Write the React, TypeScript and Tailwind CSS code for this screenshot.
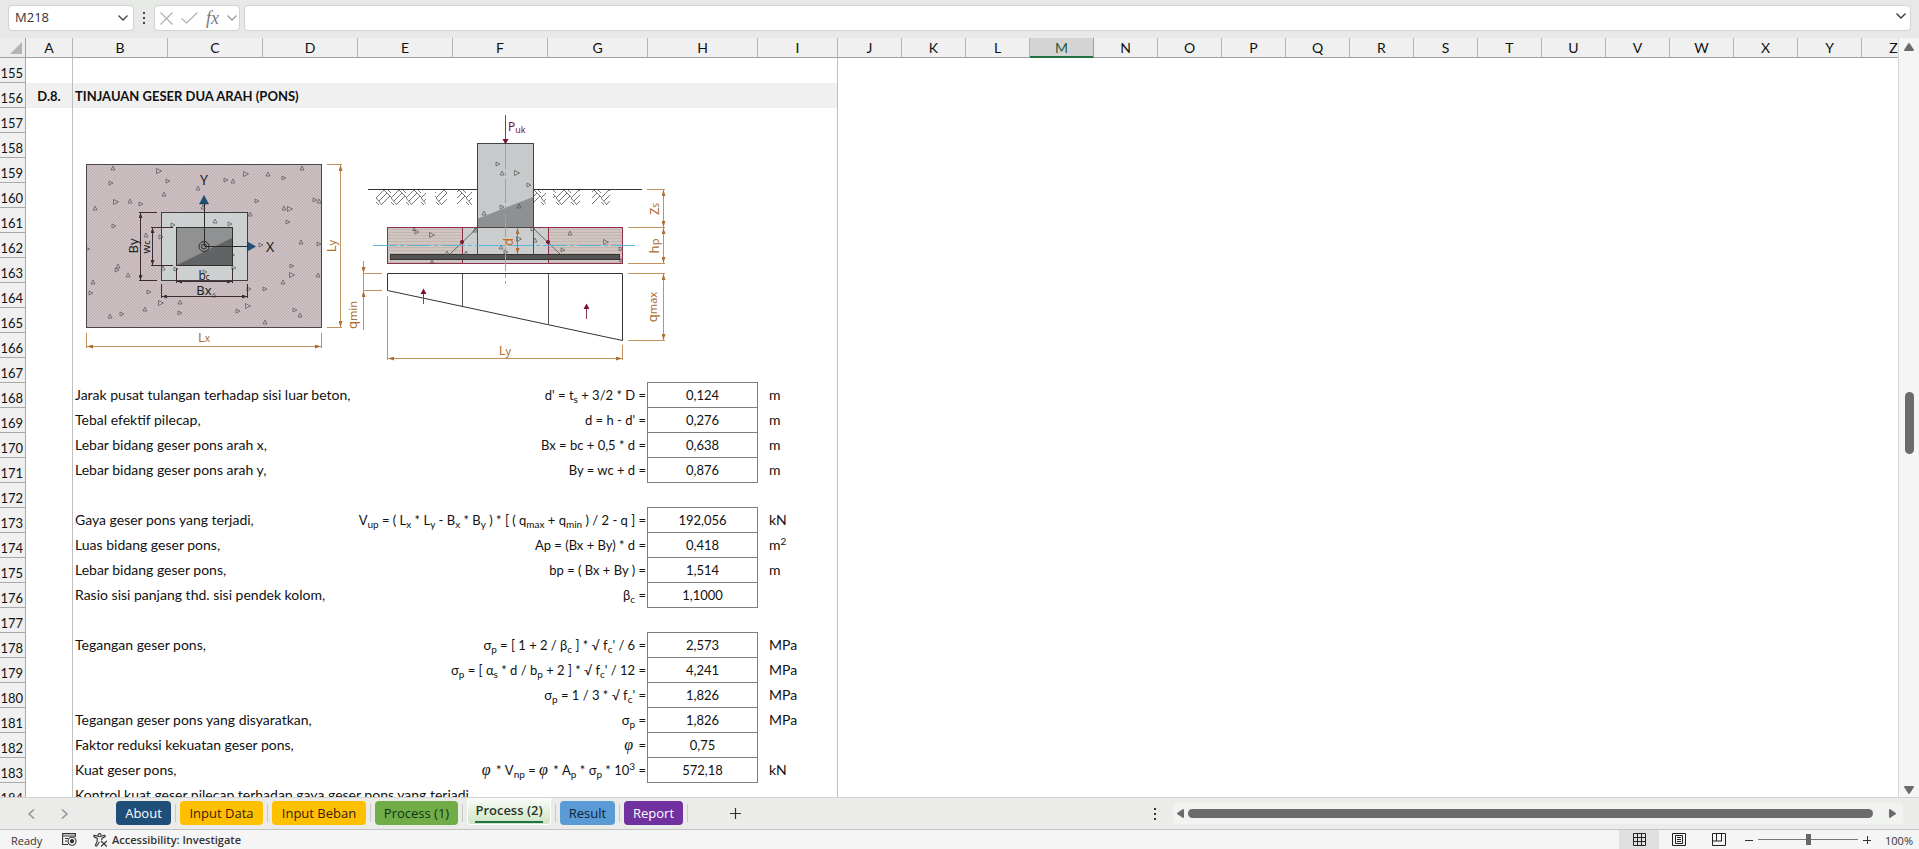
import { Fragment, type ReactElement, type ReactNode } from 'react'
import { clsx } from 'clsx'

type Row = {
  no: number
  label?: string
  formula?: ReactNode
  value?: string
  unit?: ReactNode
}

type SheetTab = {
  name: string
  className: string
  active?: boolean
}

type Mark = [x: number, y: number, size: number, dir: 'r' | 'u']

function Sub({ children }: { children: ReactNode }): ReactElement {
  return <sub className="text-[10px] leading-none">{children}</sub>
}

function Phi(): ReactElement {
  return <i className="pr-0.5 font-['Liberation_Serif',serif] text-base leading-none">φ</i>
}

const columns = [
  { name: 'A', className: 'w-[47px]' },
  { name: 'B', className: 'w-[95px]' },
  { name: 'C', className: 'w-[95px]' },
  { name: 'D', className: 'w-[95px]' },
  { name: 'E', className: 'w-[95px]' },
  { name: 'F', className: 'w-[95px]' },
  { name: 'G', className: 'w-[100px]' },
  { name: 'H', className: 'w-[110px]' },
  { name: 'I', className: 'w-[80px]' },
  ...'JKLMNOPQRSTUVWXYZ'.split('').map((name) => ({ name, className: 'w-16' })),
]

const selectedColumn = 'M'

const rows: Row[] = [
  { no: 168, label: 'Jarak pusat tulangan terhadap sisi luar beton,', formula: <>d' = t<Sub>s</Sub> + 3/2 * D =</>, value: '0,124', unit: 'm' },
  { no: 169, label: 'Tebal efektif pilecap,', formula: "d = h - d' =", value: '0,276', unit: 'm' },
  { no: 170, label: 'Lebar bidang geser pons arah x,', formula: 'Bx = bc + 0,5 * d =', value: '0,638', unit: 'm' },
  { no: 171, label: 'Lebar bidang geser pons arah y,', formula: 'By = wc + d =', value: '0,876', unit: 'm' },
  { no: 172 },
  {
    no: 173,
    label: 'Gaya geser pons yang terjadi,',
    formula: (
      <>
        V<Sub>up</Sub> = ( L<Sub>x</Sub> * L<Sub>y</Sub> - B<Sub>x</Sub> * B<Sub>y</Sub> ) * [ ( q<Sub>max</Sub> + q
        <Sub>min</Sub> ) / 2 - q ] =
      </>
    ),
    value: '192,056',
    unit: 'kN',
  },
  { no: 174, label: 'Luas bidang geser pons,', formula: 'Ap = (Bx + By) * d =', value: '0,418', unit: <>m<sup className="text-[10px] leading-none">2</sup></> },
  { no: 175, label: 'Lebar bidang geser pons,', formula: 'bp = ( Bx + By ) =', value: '1,514', unit: 'm' },
  { no: 176, label: 'Rasio sisi panjang thd. sisi pendek kolom,', formula: <>β<Sub>c</Sub> =</>, value: '1,1000' },
  { no: 177 },
  {
    no: 178,
    label: 'Tegangan geser pons,',
    formula: <>σ<Sub>p</Sub> = [ 1 + 2 / β<Sub>c</Sub> ] * √ f<Sub>c</Sub>' / 6 =</>,
    value: '2,573',
    unit: 'MPa',
  },
  {
    no: 179,
    formula: <>σ<Sub>p</Sub> = [ α<Sub>s</Sub> * d / b<Sub>p</Sub> + 2 ] * √ f<Sub>c</Sub>' / 12 =</>,
    value: '4,241',
    unit: 'MPa',
  },
  { no: 180, formula: <>σ<Sub>p</Sub> = 1 / 3 * √ f<Sub>c</Sub>' =</>, value: '1,826', unit: 'MPa' },
  { no: 181, label: 'Tegangan geser pons yang disyaratkan,', formula: <>σ<Sub>p</Sub> =</>, value: '1,826', unit: 'MPa' },
  { no: 182, label: 'Faktor reduksi kekuatan geser pons,', formula: <><Phi /> =</>, value: '0,75' },
  {
    no: 183,
    label: 'Kuat geser pons,',
    formula: (
      <>
        <Phi /> * V<Sub>np</Sub> = <Phi /> * A<Sub>p</Sub> * σ<Sub>p</Sub> * 10
        <sup className="text-[10px] leading-none">3</sup> =
      </>
    ),
    value: '572,18',
    unit: 'kN',
  },
]

const tabs: SheetTab[] = [
  { name: 'About', className: 'w-[55px] bg-[#1f4e78] text-white' },
  { name: 'Input Data', className: 'w-[83px] bg-[#ffc000] text-[#3a1a10]' },
  { name: 'Input Beban', className: 'w-[94px] bg-[#ffc000] text-[#3a1a10]' },
  { name: 'Process (1)', className: 'w-[83px] bg-[#70ad47] text-[#12301a]' },
  { name: 'Process (2)', className: 'w-[84px]', active: true },
  { name: 'Result', className: 'w-[55px] bg-[#5b9bd5] text-[#10243a]' },
  { name: 'Report', className: 'w-[59px] bg-[#7030a0] text-white' },
]

// Aggregate marks inside the concrete
const planMarks: Mark[] = [
  [113, 168, 4, 'u'], [159, 171, 5, 'r'], [111, 183, 4, 'r'], [168, 181, 4, 'r'], [198, 188, 4, 'u'],
  [226, 180, 4, 'r'], [233, 181, 4, 'u'], [246, 174, 5, 'r'], [268, 174, 4, 'u'], [284, 178, 4, 'r'],
  [302, 168, 4, 'u'], [164, 194, 4, 'u'], [95, 208, 4, 'u'], [116, 202, 5, 'r'], [130, 201, 4, 'u'],
  [141, 204, 4, 'r'], [203, 207, 4, 'u'], [257, 201, 4, 'r'], [284, 208, 4, 'u'], [290, 209, 5, 'r'],
  [315, 200, 4, 'r'], [319, 201, 4, 'u'], [250, 214, 4, 'u'], [114, 226, 4, 'r'], [146, 235, 4, 'u'],
  [288, 222, 4, 'r'], [301, 242, 4, 'u'], [319, 244, 4, 'r'], [261, 245, 4, 'r'], [88, 249, 3, 'r'],
  [118, 266, 4, 'u'], [117, 270, 4, 'r'], [128, 275, 4, 'u'], [292, 266, 4, 'r'], [292, 275, 5, 'r'],
  [283, 282, 4, 'u'], [318, 275, 4, 'u'], [93, 282, 4, 'u'], [91, 293, 4, 'r'], [149, 292, 4, 'r'],
  [265, 289, 4, 'r'], [249, 289, 4, 'r'], [214, 295, 4, 'u'], [161, 303, 5, 'r'], [180, 302, 4, 'u'],
  [180, 313, 4, 'r'], [145, 309, 4, 'u'], [238, 311, 4, 'r'], [248, 306, 5, 'r'], [295, 310, 4, 'r'],
  [300, 315, 4, 'u'], [265, 322, 4, 'u'], [110, 316, 4, 'u'], [122, 314, 4, 'r'],
]

const planInnerMarks: Mark[] = [
  [173, 225, 4, 'r'], [215, 221, 4, 'u'], [230, 224, 4, 'r'], [161, 237, 4, 'r'], [163, 268, 4, 'u'],
  [176, 269, 4, 'r'], [234, 268, 4, 'r'], [205, 272, 4, 'r'], [233, 255, 3, 'r'],
]

const sectionMarks: Mark[] = [
  [498, 164, 4, 'r'], [502, 173, 4, 'u'], [517, 173, 5, 'r'], [529, 185, 4, 'r'], [484, 213, 4, 'u'],
  [502, 207, 4, 'r'], [519, 206, 4, 'u'], [417, 232, 4, 'r'], [432, 235, 5, 'r'], [447, 253, 4, 'u'],
  [466, 253, 4, 'u'], [475, 230, 4, 'u'], [501, 247, 4, 'u'], [506, 252, 4, 'r'], [519, 239, 5, 'r'],
  [533, 229, 4, 'r'], [535, 240, 4, 'u'], [563, 250, 4, 'r'], [570, 233, 4, 'u'], [606, 242, 5, 'r'],
  [621, 249, 4, 'r'], [621, 260, 3, 'u'], [432, 261, 3, 'u'], [414, 229, 3, 'u'],
]

function Marks({ items }: { items: Mark[] }): ReactElement {
  return (
    <g fill="none" stroke="#555" strokeWidth="0.7">
      {items.map(([x, y, s, dir]) => (
        <path
          key={`${x}-${y}`}
          d={dir === 'r' ? `M${x - s / 2} ${y - s / 2}l${s} ${s / 2}l${-s} ${s / 2}z` : `M${x - s / 2} ${y + s / 2}l${s / 2} ${-s}l${s / 2} ${s}z`}
        />
      ))}
    </g>
  )
}

function FootingDrawing(): ReactElement {
  return (
    <svg
      viewBox="73 108 764 275"
      className="block h-[275px] w-[764px]"
      fontFamily="'Noto Sans', sans-serif"
      role="img"
      aria-label="Pons"
    >
      <defs>
        <pattern id="plan-hatch" width="3" height="3" patternUnits="userSpaceOnUse">
          <rect width="3" height="3" fill="#cec1c4" />
          <path d="M0 3L3 0" stroke="#b3a3a8" strokeWidth="0.6" />
        </pattern>
        <pattern id="section-hatch" width="3" height="3" patternUnits="userSpaceOnUse">
          <rect width="3" height="3" fill="#d0c5c0" />
          <path d="M0 1.5H3" stroke="#c3b7b1" strokeWidth="1" />
        </pattern>
        <pattern id="soil" x="376" y="190" width="15" height="15" patternUnits="userSpaceOnUse">
          <path d="M0 8L8 0M3 11L11 3M6 14L14 6M8 0L15 7M11 -1L15 3M0 8L6 15M0 12L3 15" stroke="#555" strokeWidth="0.8" fill="none" />
        </pattern>
        <marker id="dim-orange" markerWidth="6" markerHeight="4" refX="6" refY="2" orient="auto-start-reverse" markerUnits="userSpaceOnUse">
          <path d="M0 0L6 2L0 4z" fill="#ad6f30" />
        </marker>
        <marker id="dim-dark" markerWidth="5" markerHeight="4" refX="5" refY="2" orient="auto-start-reverse" markerUnits="userSpaceOnUse">
          <path d="M0 0L5 2L0 4z" fill="#3d2b30" />
        </marker>
      </defs>

      {/* plan */}
      <rect x="86.5" y="164.5" width="235" height="163" fill="url(#plan-hatch)" stroke="#4a4548" />
      <Marks items={planMarks} />
      <rect x="161.5" y="212.5" width="86" height="68" fill="#cdd0d1" stroke="#3f3f3f" />
      <Marks items={planInnerMarks} />
      <rect x="176.5" y="227.5" width="56" height="38" fill="#909193" stroke="#2f2f2f" />
      <path d="M177 265L232 238V265z" fill="#626365" />
      <g stroke="#2b2b2b" fill="none">
        <path d="M204.5 246V204M204.5 246.5H247" />
        <circle cx="204" cy="246.5" r="5" />
        <circle cx="204" cy="246.5" r="2.5" />
      </g>
      <path d="M204 195.5L208.5 204H199.5zM255.5 246.5L247.5 242V251z" fill="#1d5179" stroke="#123349" strokeWidth="0.5" />
      <g stroke="#3d2b30" fill="none">
        <path d="M139 212.5H157M139 280.5H157M151 227.5H173M151 265.5H173" />
        <path d="M176.5 268V283M232.5 268V283M161.5 284V298M247.5 284V298" />
        <path d="M140.5 213V280" markerStart="url(#dim-dark)" markerEnd="url(#dim-dark)" />
        <path d="M152.5 228V265" markerStart="url(#dim-dark)" markerEnd="url(#dim-dark)" />
        <path d="M177 281.5H232" markerStart="url(#dim-dark)" markerEnd="url(#dim-dark)" />
        <path d="M162 296.5H247" markerStart="url(#dim-dark)" markerEnd="url(#dim-dark)" />
      </g>
      <g fill="#222" textAnchor="middle">
        <text x="204" y="185" fontSize="14">Y</text>
        <text x="270" y="252" fontSize="14">X</text>
        <text x="204" y="280" fontSize="12">b<tspan fontSize="8">c</tspan></text>
        <text x="204" y="295" fontSize="13">Bx</text>
        <text transform="translate(138 246) rotate(-90)" fontSize="13">By</text>
        <text transform="translate(150 247) rotate(-90)" fontSize="11">w<tspan fontSize="9">c</tspan></text>
      </g>

      {/* section */}
      <rect x="376" y="190" width="50" height="15" fill="url(#soil)" />
      <rect x="435" y="190" width="12" height="15" fill="url(#soil)" />
      <rect x="457" y="190" width="15" height="15" fill="url(#soil)" />
      <rect x="534" y="190" width="12" height="15" fill="url(#soil)" />
      <rect x="553" y="190" width="27" height="15" fill="url(#soil)" />
      <rect x="592" y="190" width="18" height="15" fill="url(#soil)" />
      <path d="M368 189.5H642" stroke="#333" />
      <rect x="387.5" y="227.5" width="235" height="36" fill="url(#section-hatch)" stroke="#8e3049" />
      <rect x="462" y="228" width="86" height="35" fill="#cbcdce" />
      <path d="M462.5 228V263M548.5 228V263M477.5 228V254M533.5 228V254" stroke="#8e3049" />
      <path d="M477 228L450 254M533 228L560 254" stroke="#666" />
      <circle cx="462" cy="242" r="2" fill="#7b1232" />
      <circle cx="548" cy="242" r="2" fill="#7b1232" />
      <rect x="477.5" y="143.5" width="56" height="84" fill="#c8c9cb" stroke="#444" />
      <path d="M478 218.5L533 197V227H478z" fill="#8f9092" />
      <rect x="390.5" y="254.5" width="229" height="5" fill="#565353" stroke="#353233" />
      <Marks items={sectionMarks} />
      <path d="M505.5 115V140" stroke="#8a3a4c" />
      <path d="M502.5 139H508.5L505.5 144.5z" fill="#7b1232" />
      <text x="508" y="131" fontSize="12" fill="#7b1232">P<tspan fontSize="9" dy="2">uk</tspan></text>
      <path d="M387.5 273.5H622.5V340.5L387.5 290.5z" fill="none" stroke="#333" />
      <path d="M462.5 274V306M548.5 274V324" stroke="#555" />
      <path d="M373 245.5H638M505.5 145V284" stroke="#5bb8d8" strokeDasharray="24 3 4 3" fill="none" />
      <path d="M423.5 293V304M586.5 308V319" stroke="#8a3a4c" />
      <path d="M420.5 294H426.5L423.5 288.5zM583.5 309H589.5L586.5 303.5z" fill="#7b1232" />

      {/* dimensions */}
      <g stroke="#c2935f" fill="none">
        <path d="M86.5 333V348M321.5 333V348M327 164.5H342M327 327.5H342M387.5 296V360M622.5 345V360" />
        <path d="M363 273.5H382M363 290.5H382M647 189.5H665M628 227.5H665M628 263.5H665M628 273.5H665M628 340.5H665" />
        <path d="M87 346.5H321" markerStart="url(#dim-orange)" markerEnd="url(#dim-orange)" />
        <path d="M340.5 165V327" markerStart="url(#dim-orange)" markerEnd="url(#dim-orange)" />
        <path d="M388 358.5H622" markerStart="url(#dim-orange)" markerEnd="url(#dim-orange)" />
        <path d="M663.5 190V227" markerStart="url(#dim-orange)" markerEnd="url(#dim-orange)" />
        <path d="M663.5 228V263" markerStart="url(#dim-orange)" markerEnd="url(#dim-orange)" />
        <path d="M663.5 274V340" markerStart="url(#dim-orange)" markerEnd="url(#dim-orange)" />
        <path d="M363.5 261V273" markerEnd="url(#dim-orange)" />
        <path d="M363.5 330V291" markerEnd="url(#dim-orange)" />
        <path d="M363.5 273V291" />
        <path d="M517.5 228V254" stroke="#c96a1e" markerStart="url(#dim-orange)" markerEnd="url(#dim-orange)" />
      </g>
      <g fill="#ad6f30" textAnchor="middle">
        <text x="204" y="342" fontSize="13">L<tspan fontSize="10">x</tspan></text>
        <text x="505" y="355" fontSize="13">L<tspan fontSize="11">y</tspan></text>
        <text transform="translate(336 246) rotate(-90)" fontSize="13">L<tspan fontSize="11">y</tspan></text>
        <text transform="translate(357 315) rotate(-90)" fontSize="13">q<tspan fontSize="11">min</tspan></text>
        <text transform="translate(659 209) rotate(-90)" fontSize="13">Z<tspan fontSize="10">s</tspan></text>
        <text transform="translate(659 246) rotate(-90)" fontSize="13">h<tspan fontSize="11">p</tspan></text>
        <text transform="translate(657 307) rotate(-90)" fontSize="13">q<tspan fontSize="11">max</tspan></text>
        <text transform="translate(513 242) rotate(-90)" fontSize="13" fill="#c96a1e">d</text>
      </g>
    </svg>
  )
}

function Chevron({ className }: { className?: string }): ReactElement {
  return (
    <svg viewBox="0 0 10 6" className={clsx('h-[6px] w-[10px]', className)} fill="none" stroke="currentColor" strokeWidth="1.3">
      <path d="M0.5 0.5L5 5L9.5 0.5" />
    </svg>
  )
}

function FormulaBar(): ReactElement {
  return (
    <div className="flex h-[38px] shrink-0 items-start bg-[#e6e9e6] px-2 pt-[5px]">
      <div className="flex h-[26px] w-[126px] items-center rounded border border-[#d0d3d0] bg-white pr-[5px] pl-1.5">
        <input
          aria-label="Name box"
          defaultValue="M218"
          className="w-full min-w-0 bg-transparent font-['Open_Sans',sans-serif] text-[13px] text-[#333] outline-none"
        />
        <button type="button" aria-label="Name list" className="text-[#444]">
          <Chevron />
        </button>
      </div>
      <svg viewBox="0 0 20 26" className="h-[26px] w-5 shrink-0" fill="#444">
        <rect x="9" y="7" width="2" height="2" />
        <rect x="9" y="12" width="2" height="2" />
        <rect x="9" y="17" width="2" height="2" />
      </svg>
      <div className="flex h-[26px] w-[86px] items-center justify-between rounded border border-[#d0d3d0] bg-white pr-0.5 pl-[5px] text-[#b0b0b0]">
        <button type="button" aria-label="Cancel">
          <svg viewBox="0 0 13 13" className="size-[13px]" fill="none" stroke="currentColor" strokeWidth="1.2">
            <path d="M0.5 0.5L12.5 12.5M12.5 0.5L0.5 12.5" />
          </svg>
        </button>
        <button type="button" aria-label="Enter">
          <svg viewBox="0 0 17 12" className="h-3 w-[17px]" fill="none" stroke="currentColor" strokeWidth="1.2">
            <path d="M0.5 6.5L5.5 11L16.5 0.5" />
          </svg>
        </button>
        <button
          type="button"
          className="font-['Liberation_Serif',serif] text-lg leading-none text-[#7a7a7a] italic"
        >
          fx
        </button>
        <Chevron className="text-[#999]" />
      </div>
      <div className="ml-1 flex h-[26px] flex-1 items-center rounded border border-[#d0d3d0] bg-white pr-1">
        <input aria-label="Formula bar" className="min-w-0 flex-1 bg-transparent px-2 text-sm outline-none" />
        <button type="button" aria-label="Expand formula bar" className="pb-1 text-[#333]">
          <Chevron />
        </button>
      </div>
    </div>
  )
}

function RowHeader({ no }: { no: number }): ReactElement {
  return (
    <th
      scope="row"
      className="h-[25px] border-r border-b border-[#a9a9a9] bg-[#f0f0f0] p-0 pr-0.5 text-right align-bottom text-[13px] leading-[18px] font-normal"
    >
      {no}
    </th>
  )
}

function Sheet(): ReactElement {
  return (
    <div className="min-w-0 flex-1 overflow-hidden border-r border-[#d4d8d4] bg-white">
      <table className="w-[1926px] table-fixed border-separate border-spacing-0 font-[Lato,'Open_Sans',sans-serif] text-sm text-[#111]">
        <colgroup>
          <col className="w-[26px]" />
          {columns.map((col) => (
            <col key={col.name} className={col.className} />
          ))}
        </colgroup>
        <thead>
          <tr>
            <th className="h-5 border-r border-b border-[#a0a0a0] bg-[#ececec] p-0">
              <svg viewBox="0 0 25 19" className="block h-[19px] w-[25px]">
                <path d="M22 4V16H10z" fill="#b4b4b4" />
              </svg>
            </th>
            {columns.map((col) => (
              <th
                key={col.name}
                scope="col"
                className={clsx(
                  'h-5 border-r border-b p-0 text-center align-bottom text-sm leading-[18px] font-normal',
                  col.name === selectedColumn
                    ? 'border-r-[#a0a0a0] border-b-[#217346] bg-[#d4d4d4] text-[#1f5c3c] shadow-[inset_0_-1px_0_#217346]'
                    : 'border-[#a0a0a0] border-r-[#b4b4b4] bg-[#eff0ef]',
                )}
              >
                {col.name}
              </th>
            ))}
          </tr>
        </thead>
        <tbody>
          <tr>
            <RowHeader no={155} />
            <td className="border-r border-[#c0c0c0] p-0" />
            <td colSpan={8} className="border-r border-[#c0c0c0] p-0" />
            <td colSpan={17} className="p-0" />
          </tr>
          <tr>
            <RowHeader no={156} />
            <td className="border-r border-[#c0c0c0] bg-[#f0f0f0] p-0 text-center text-[13px] leading-6 font-bold">D.8.</td>
            <td colSpan={8} className="border-r border-[#c0c0c0] bg-[#f0f0f0] p-0 pl-0.5 text-[13px] leading-6 font-bold">
              TINJAUAN GESER DUA ARAH (PONS)
            </td>
            <td colSpan={17} className="p-0" />
          </tr>
          {Array.from({ length: 11 }, (_, i) => (
            <tr key={i}>
              <RowHeader no={157 + i} />
              <td className="border-r border-[#c0c0c0] p-0" />
              {i === 0 && (
                <td colSpan={8} rowSpan={11} className="border-r border-[#c0c0c0] p-0 align-top">
                  <FootingDrawing />
                </td>
              )}
              <td colSpan={17} className="p-0" />
            </tr>
          ))}
          {rows.map((row, i) => (
            <tr key={row.no} className="leading-6">
              <RowHeader no={row.no} />
              <td className="border-r border-[#c0c0c0] p-0" />
              <td colSpan={3} className="p-0 pl-0.5 align-top whitespace-nowrap">
                {row.label}
              </td>
              <td colSpan={3} className="p-0 pr-0.5 text-right align-top text-[13px] whitespace-nowrap">
                <div className="h-6">{row.formula}</div>
              </td>
              {row.value ? (
                <td
                  className={clsx(
                    'border-r border-b border-[#7f7f7f] p-0 text-center text-[13px]',
                    rows[i - 1]?.value
                      ? 'shadow-[-1px_0_0_#7f7f7f]'
                      : 'shadow-[-1px_0_0_#7f7f7f,0_-1px_0_#7f7f7f,-1px_-1px_0_#7f7f7f]',
                  )}
                >
                  {row.value}
                </td>
              ) : (
                <td className="p-0" />
              )}
              <td className="border-r border-[#c0c0c0] p-0 pl-[11px] align-top">{row.unit}</td>
              <td colSpan={17} className="p-0" />
            </tr>
          ))}
          <tr>
            <RowHeader no={184} />
            <td className="border-r border-[#c0c0c0] p-0" />
            <td colSpan={8} className="border-r border-[#c0c0c0] p-0 pl-0.5 align-top leading-6">
              Kontrol kuat geser pilecap terhadap gaya geser pons yang terjadi
            </td>
            <td colSpan={17} className="p-0" />
          </tr>
        </tbody>
      </table>
    </div>
  )
}

function VerticalScroll(): ReactElement {
  return (
    <div className="flex w-5 shrink-0 flex-col items-center bg-[#f4f5f4] py-0.5 text-[#6b6b6b]">
      <button type="button" aria-label="Scroll up" className="py-[3px]">
        <svg viewBox="0 0 10 8" className="h-2 w-[10px]" fill="currentColor">
          <path d="M4.2 0.5Q5 -0.3 5.8 0.5L10 7Q10 8 9 8H1Q0 8 0 7z" />
        </svg>
      </button>
      <div className="flex min-h-0 w-full flex-1 flex-col items-center">
        <div className="grow-[341]" />
        <div className="h-[62px] w-[9px] rounded-full bg-[#6b6b6b]" />
        <div className="grow-[333]" />
      </div>
      <button type="button" aria-label="Scroll down" className="py-px">
        <svg viewBox="0 0 10 8" className="h-2 w-[10px]" fill="currentColor">
          <path d="M4.2 7.5Q5 8.3 5.8 7.5L10 1Q10 0 9 0H1Q0 0 0 1z" />
        </svg>
      </button>
    </div>
  )
}

function TabBar(): ReactElement {
  return (
    <div className="flex h-[33px] shrink-0 items-start border-t border-b border-t-[#d0d3d0] border-b-[#c2c4c2] bg-[#ebebea] font-['Open_Sans',sans-serif] text-[13px]">
      <div className="flex h-[31px] w-[112px] shrink-0 items-center gap-[26px] pl-7 text-[#8f8f8f]">
        <button type="button" aria-label="Previous sheet">
          <svg viewBox="0 0 7 10" className="h-[10px] w-[7px]" fill="none" stroke="currentColor" strokeWidth="1.4">
            <path d="M6 0.5L1 5L6 9.5" />
          </svg>
        </button>
        <button type="button" aria-label="Next sheet">
          <svg viewBox="0 0 7 10" className="h-[10px] w-[7px]" fill="none" stroke="currentColor" strokeWidth="1.4">
            <path d="M1 0.5L6 5L1 9.5" />
          </svg>
        </button>
      </div>
      {tabs.map((tab) => (
        <Fragment key={tab.name}>
          {tab.active ? (
            <button
              type="button"
              className={clsx(
                'mx-1 flex h-[27px] shrink-0 justify-center rounded-b border border-t-0 border-white bg-linear-to-b from-[#fafcf9] to-[#cfe4c2] font-semibold text-[#26352a]',
                tab.className,
              )}
            >
              <span className="h-[25px] border-b-2 border-[#217346] leading-6 whitespace-nowrap">{tab.name}</span>
            </button>
          ) : (
            <button
              type="button"
              className={clsx('mx-1 mt-[3px] h-6 shrink-0 rounded leading-6 whitespace-nowrap', tab.className)}
            >
              {tab.name}
            </button>
          )}
          <span className="mt-1.5 h-[18px] w-px shrink-0 bg-[#c9cbc9]" />
        </Fragment>
      ))}
      <button type="button" aria-label="New sheet" className="mt-2.5 ml-[42px] shrink-0 text-[#333]">
        <svg viewBox="0 0 11 11" className="size-[11px]" stroke="currentColor" strokeWidth="1.2">
          <path d="M5.5 0V11M0 5.5H11" />
        </svg>
      </button>
      <div className="min-w-0 flex-1" />
      <svg viewBox="0 0 4 12" className="mt-2.5 h-3 w-1 shrink-0" fill="#333">
        <rect x="1" y="0" width="2" height="2" />
        <rect x="1" y="5" width="2" height="2" />
        <rect x="1" y="10" width="2" height="2" />
      </svg>
      <div className="mr-4 ml-4 flex h-[21px] w-[730px] shrink-0 items-center gap-1 self-center rounded bg-[#f1f3f1] px-1 text-[#6b6b6b]">
        <button type="button" aria-label="Scroll left">
          <svg viewBox="0 0 7 9" className="h-[9px] w-[7px]" fill="currentColor">
            <path d="M0.5 3.8Q-0.3 4.5 0.5 5.2L6 9Q7 9 7 8V1Q7 0 6 0z" />
          </svg>
        </button>
        <div className="h-[9px] flex-1 rounded-full bg-[#6b6b6b]" />
        <button type="button" aria-label="Scroll right" className="pr-[3px] pl-3">
          <svg viewBox="0 0 7 9" className="h-[9px] w-[7px]" fill="currentColor">
            <path d="M6.5 3.8Q7.3 4.5 6.5 5.2L1 9Q0 9 0 8V1Q0 0 1 0z" />
          </svg>
        </button>
      </div>
    </div>
  )
}

function StatusBar(): ReactElement {
  return (
    <div className="flex h-[19px] shrink-0 items-center bg-[#f5f5f5] font-['Open_Sans',sans-serif] text-[11px] leading-[17px] text-[#333]">
      <span className="w-[62px] pt-0.5 pl-[11px]">Ready</span>
      <button type="button" aria-label="Record macro">
        <svg viewBox="0 0 15 13" className="h-[13px] w-[15px]" fill="none" stroke="#333" strokeWidth="1.1">
          <path d="M6 11.5H0.6V0.6H13.4V4M0.6 3H13.4M3 5.5H6M3 8H5" />
          <circle cx="10" cy="8.2" r="4" />
          <circle cx="10" cy="8.2" r="1.6" fill="#333" />
        </svg>
      </button>
      <button type="button" className="ml-4 flex items-center gap-1 font-semibold">
        <svg viewBox="0 0 15 14" className="h-[14px] w-[15px]" fill="none" stroke="#333" strokeWidth="1.1">
          <circle cx="6.5" cy="2.2" r="1.6" />
          <path d="M4.8 3.2L1.6 2.4Q0.3 2.6 1 3.8L4.2 5.4V8L2.4 12.2Q2.6 13.6 3.8 12.8L6.4 8.8M8.2 3.2L11.4 2.4Q12.8 2.6 12 3.8L8.8 5.4V7.2" />
          <path d="M8 8L13.8 13.5M13.8 8L8 13.5" />
        </svg>
        Accessibility: Investigate
      </button>
      <div className="flex-1" />
      <button type="button" aria-label="Normal" className="flex h-full w-10 items-center justify-center bg-[#e0e0e0]">
        <svg viewBox="0 0 13 13" className="size-[13px]" fill="none" stroke="#222">
          <path d="M0.5 0.5H12.5V12.5H0.5zM4.5 0V13M8.5 0V13M0 4.5H13M0 8.5H13" />
        </svg>
      </button>
      <button type="button" aria-label="Page layout" className="flex w-10 justify-center">
        <svg viewBox="0 0 14 13" className="h-[13px] w-[14px]" fill="none" stroke="#222">
          <path d="M0.5 0.5H13.5V12.5H0.5zM3.5 2.5H10.5V10.5H3.5zM5 4.5H9M5 6.5H9M5 8.5H9" />
        </svg>
      </button>
      <button type="button" aria-label="Page break preview" className="flex w-10 justify-center">
        <svg viewBox="0 0 14 13" className="h-[13px] w-[14px]" fill="none" stroke="#222">
          <path d="M0.5 0.5H13.5V12.5H0.5zM4.5 0V8M9.5 0V8M0 8H10" />
        </svg>
      </button>
      <button type="button" aria-label="Zoom out" className="ml-[6px]">
        <svg viewBox="0 0 8 8" className="size-2" stroke="#333">
          <path d="M0 4.5H8" />
        </svg>
      </button>
      <input
        type="range"
        min={0}
        max={100}
        defaultValue={50}
        aria-label="Zoom"
        className="mx-[5px] h-3 w-[100px] appearance-none bg-[linear-gradient(#777,#777)] bg-[length:100%_1px] bg-center bg-no-repeat [&::-webkit-slider-thumb]:h-[11px] [&::-webkit-slider-thumb]:w-[5px] [&::-webkit-slider-thumb]:appearance-none [&::-webkit-slider-thumb]:bg-[#666]"
      />
      <button type="button" aria-label="Zoom in">
        <svg viewBox="0 0 8 8" className="size-2" stroke="#333">
          <path d="M0 4.5H8M4.5 0V8" />
        </svg>
      </button>
      <span className="w-12 pt-0.5 pr-[6px] text-right">100%</span>
    </div>
  )
}

export default function App(): ReactElement {
  return (
    <div className="flex h-screen flex-col overflow-hidden bg-[#e6e9e6]">
      <FormulaBar />
      <div className="flex min-h-0 flex-1">
        <Sheet />
        <VerticalScroll />
      </div>
      <TabBar />
      <StatusBar />
    </div>
  )
}
